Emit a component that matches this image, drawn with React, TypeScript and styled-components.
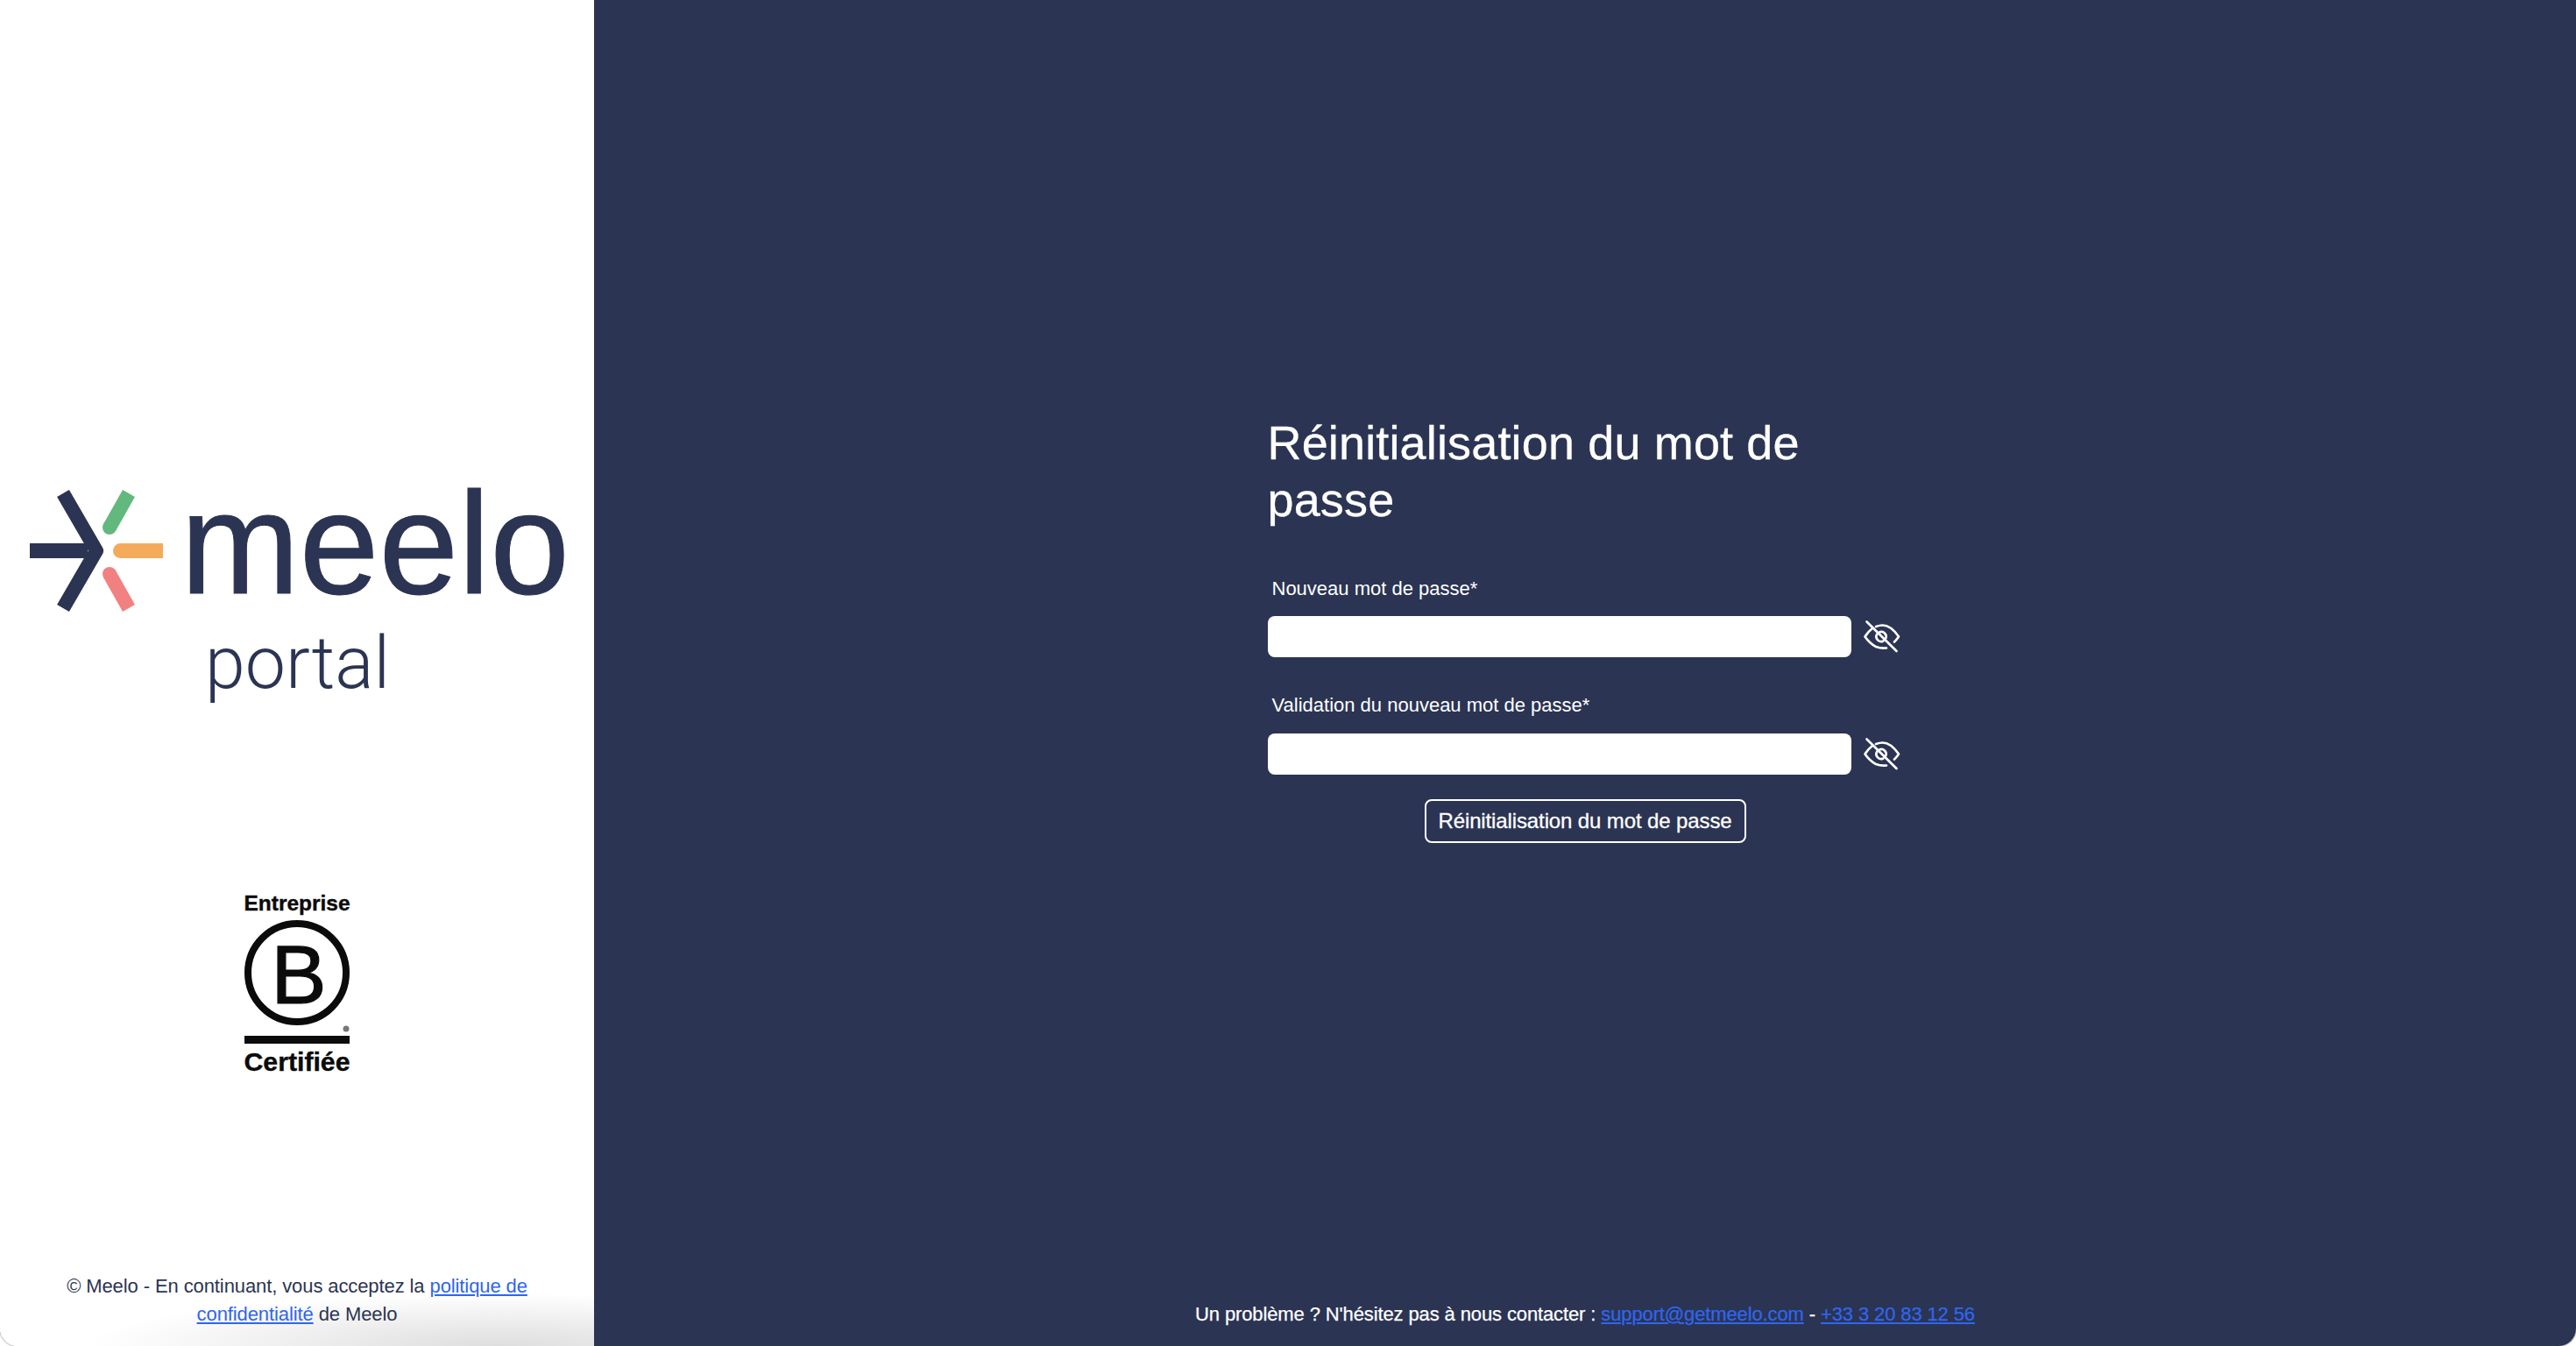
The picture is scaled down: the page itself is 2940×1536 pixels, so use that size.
import styled, { createGlobalStyle } from 'styled-components';

const NAVY = '#2b3453';
const LINK = '#2f66ee';

const GlobalStyle = createGlobalStyle`
  html, body {
    margin: 0;
    padding: 0;
    background: #fff;
    font-family: "Liberation Sans", Arial, sans-serif;
  }
`;

const Page = styled.div`
  display: flex;
  width: 2940px;
  height: 1536px;
  overflow: hidden;
  border-radius: 0 0 20px 20px;
  box-shadow: 0 0 2px rgba(0, 0, 0, 0.8);
`;

const Sidebar = styled.aside`
  display: flex;
  flex-direction: column;
  align-items: center;
  flex: 0 0 678px;
  height: 1536px;
  box-sizing: border-box;
  padding: 520px 0 20px;
  color: ${NAVY};
  background: radial-gradient(ellipse 470px 60px at 570px 100%, #dedede 0%, rgba(222, 222, 222, 0) 100%), #fff;
`;

const LogoSvg = styled.svg`
  display: block;
  flex: none;
  width: 678px;
  height: 290px;
`;

const LogoWord = styled.text`
  font-family: "Liberation Sans", Arial, sans-serif;
  font-size: 165px;
  fill: ${NAVY};
  stroke: ${NAVY};
  stroke-width: 1px;
`;

const PortalWord = styled.text`
  font-family: Roboto, "Liberation Sans", Arial, sans-serif;
  font-size: 83px;
  font-weight: 300;
  fill: ${NAVY};
`;

const CertSvg = styled.svg`
  display: block;
  flex: none;
  width: 160px;
  height: 220px;
  margin-top: 200px;
`;

const CertWord = styled.text<{ size: number; heavy: number }>`
  font-family: "Liberation Sans", Arial, sans-serif;
  font-size: ${(props) => props.size}px;
  font-weight: 700;
  fill: #0b0b0b;
  stroke: #0b0b0b;
  stroke-width: ${(props) => props.heavy}px;
`;

const CertLetter = styled.text`
  font-family: "Liberation Sans", Arial, sans-serif;
  font-size: 95px;
  fill: #0b0b0b;
  stroke: #0b0b0b;
  stroke-width: 1.2px;
`;

const Legal = styled.p`
  width: 560px;
  margin: auto 0 0;
  font-size: 22px;
  line-height: 32px;
  letter-spacing: -0.1px;
  text-align: center;
`;

const TextLink = styled.a`
  color: ${LINK};
  text-decoration: underline;
  cursor: pointer;
`;

const Main = styled.main`
  display: flex;
  flex: 1;
  flex-direction: column;
  align-items: center;
  box-sizing: border-box;
  padding: 473px 0 20px;
  color: #fff;
  background: ${NAVY};
`;

const Form = styled.form`
  display: flex;
  flex-direction: column;
  width: 725px;
`;

const Title = styled.h1`
  width: 640px;
  margin: 0 0 52px;
  font-size: 54px;
  font-weight: 400;
  line-height: 65px;
  letter-spacing: 0.15px;
  -webkit-text-stroke: 0.3px #fff;
`;

const FieldLabel = styled.label<{ $first?: boolean }>`
  display: block;
  margin: ${(props) => (props.$first ? '1px' : '0')} 0 ${(props) => (props.$first ? '15px' : '16px')} 5px;
  font-size: 22px;
  line-height: 32px;
`;

const FieldRow = styled.div`
  display: flex;
  align-items: center;
  gap: 12px;
  margin-bottom: 39px;

  &:last-of-type {
    margin-bottom: 28px;
  }
`;

const PasswordInput = styled.input`
  width: 666px;
  height: 47px;
  box-sizing: border-box;
  padding: 0 12px;
  border: 0;
  border-radius: 8px;
  background: #fff;
  font-size: 22px;
  outline: none;
`;

const EyeButton = styled.button`
  display: flex;
  align-items: center;
  width: 45px;
  height: 47px;
  padding: 0;
  border: 0;
  color: #fff;
  background: none;
  cursor: pointer;
`;

const SubmitButton = styled.button`
  align-self: center;
  width: 367px;
  height: 50px;
  padding: 0;
  border: 2px solid #fff;
  border-radius: 8px;
  color: #fff;
  background: transparent;
  font-family: inherit;
  font-size: 24px;
  letter-spacing: -0.12px;
  -webkit-text-stroke: 0.3px #fff;
  cursor: pointer;
`;

const Contact = styled.p`
  margin: auto 0 0;
  font-size: 22px;
  line-height: 32px;
  letter-spacing: -0.12px;
  -webkit-text-stroke: 0.25px currentColor;
`;

const EyeOffIcon = () => (
  <svg width="45" height="47" viewBox="4 0 45 47" fill="none" stroke="currentColor" strokeWidth="2.7" strokeLinecap="round" strokeLinejoin="round">
    <path d="M20 12C23 11 25.5 10.5 27.5 10.5C35 10.5 41.5 17 46 23.5C44.5 25.5 43 27.7 41 29.5" />
    <path d="M15.5 14.5C12 17 9.5 20.5 7.5 23.5C11 28.5 15 32.5 20 35C24 36.6 28 37 32 36.5" />
    <path d="M24 18.4A5.5 5.5 0 0 1 31.3 25.3" />
    <path d="M21.4 20.5A5.5 5.5 0 0 0 28.4 28.5" />
    <path d="M9.5 6.5L43.5 40" />
  </svg>
);

const MeeloLogo = () => (
  <LogoSvg viewBox="0 -20 678 290" role="img" aria-label="meelo portal">
    <g fill="none">
      <path d="M34 88.5H100" stroke={NAVY} strokeWidth="17" />
      <path d="M72 23L110 88.5L72 154" stroke={NAVY} strokeWidth="16" strokeLinejoin="round" />
      <path d="M147 23L125 62" stroke="#63b97d" strokeWidth="16" />
      <path d="M137.5 88.5H186" stroke="#f3ab5b" strokeWidth="17" />
      <path d="M147 154L125 115" stroke="#f18180" strokeWidth="16" />
    </g>
    <circle cx="125" cy="62" r="8" fill="#63b97d" />
    <circle cx="137.5" cy="88.5" r="8.5" fill="#f3ab5b" />
    <circle cx="125" cy="115" r="8" fill="#f18180" />
    <LogoWord x="206" y="137" textLength="444" lengthAdjust="spacingAndGlyphs">
      meelo
    </LogoWord>
    <PortalWord x="234" y="245" textLength="211" lengthAdjust="spacingAndGlyphs">
      portal
    </PortalWord>
  </LogoSvg>
);

const CertifiedBadge = () => (
  <CertSvg viewBox="0 0 160 220" role="img" aria-label="Entreprise B Certifiée">
    <CertWord size={24} heavy={0.4} x="19.5" y="29" textLength="121" lengthAdjust="spacingAndGlyphs">
      Entreprise
    </CertWord>
    <circle cx="80" cy="100" r="56" fill="none" stroke="#0b0b0b" strokeWidth="8" />
    <CertLetter x="82" y="135" textAnchor="middle">
      B
    </CertLetter>
    <circle cx="136" cy="164" r="3.5" fill="#777" />
    <rect x="20" y="172" width="120" height="9" fill="#0b0b0b" />
    <CertWord size={30} heavy={0.4} x="19.5" y="212" textLength="121" lengthAdjust="spacingAndGlyphs">
      Certifiée
    </CertWord>
  </CertSvg>
);

const PasswordField = ({ id, label, first }: { id: string; label: string; first?: boolean }) => (
  <>
    <FieldLabel htmlFor={id} $first={first}>
      {label}
    </FieldLabel>
    <FieldRow>
      <PasswordInput id={id} type="password" />
      <EyeButton type="button" aria-label="Afficher le mot de passe">
        <EyeOffIcon />
      </EyeButton>
    </FieldRow>
  </>
);

const App = () => (
  <Page>
    <GlobalStyle />
    <Sidebar>
      <MeeloLogo />
      <CertifiedBadge />
      <Legal>
        © Meelo - En continuant, vous acceptez la <TextLink>politique de confidentialité</TextLink> de Meelo
      </Legal>
    </Sidebar>
    <Main>
      <Form onSubmit={(e) => e.preventDefault()}>
        <Title>Réinitialisation du mot de passe</Title>
        <PasswordField id="new-password" label="Nouveau mot de passe*" first />
        <PasswordField id="confirm-password" label="Validation du nouveau mot de passe*" />
        <SubmitButton type="submit">Réinitialisation du mot de passe</SubmitButton>
      </Form>
      <Contact>
        Un problème ? N'hésitez pas à nous contacter : <TextLink>support@getmeelo.com</TextLink> -{' '}
        <TextLink>+33 3 20 83 12 56</TextLink>
      </Contact>
    </Main>
  </Page>
);

export default App;
